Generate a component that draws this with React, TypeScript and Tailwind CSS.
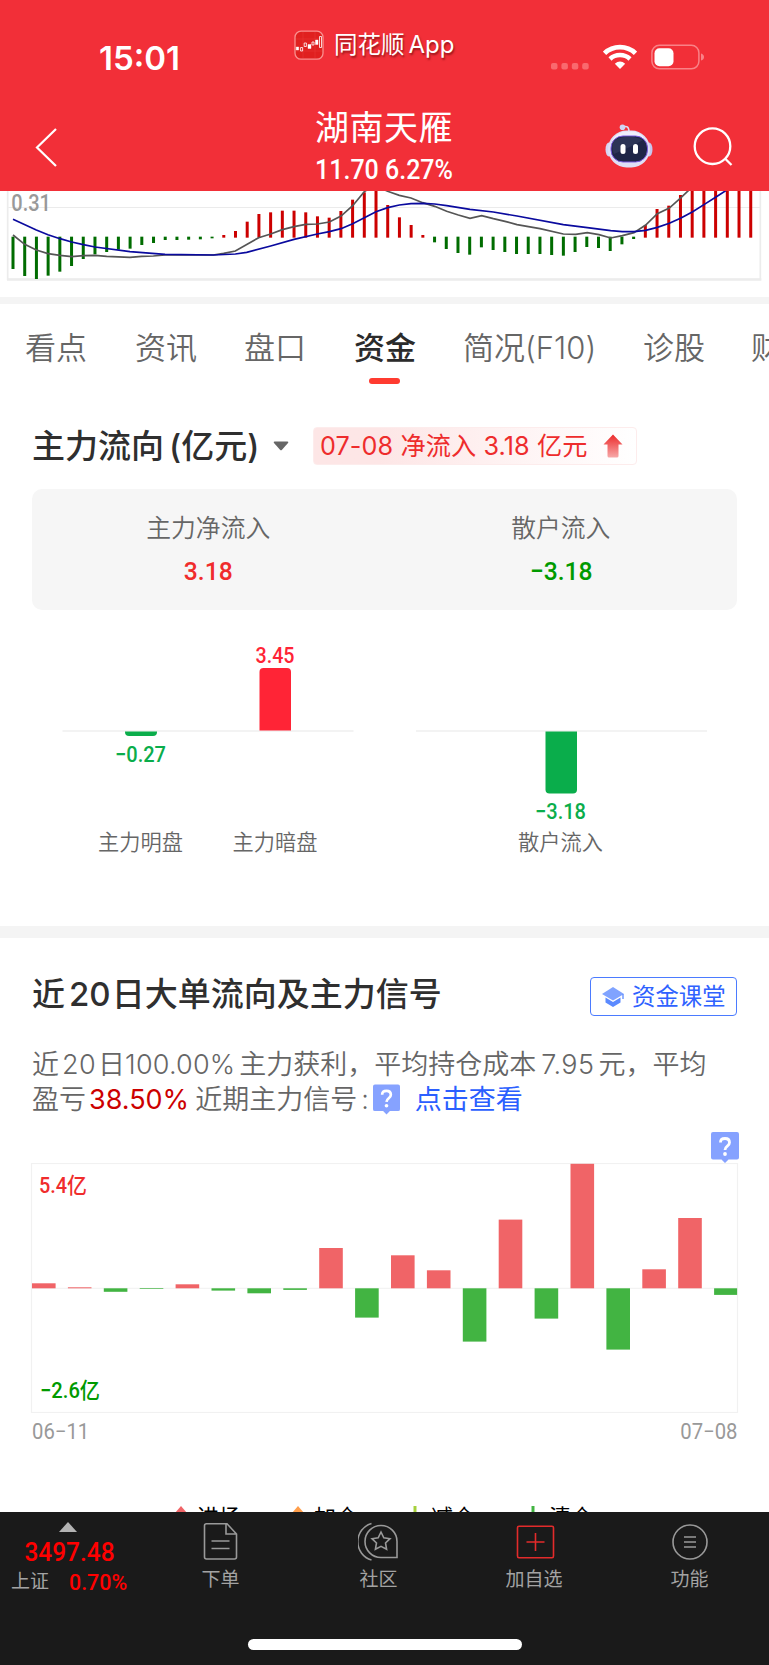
import type { ReactNode } from "react";

const MACD_STEP = 35.13;
const MACD_START = 39;

// bottom edge of a falling bar (green) or top edge of a rising bar (red)
const MACD_BARS: { up: boolean; edges: number[] }[] = [
  { up: false, edges: [252, 273, 282, 272, 260, 243, 222, 208, 201, 194, 191, 180, 174, 165, 165, 164, 163, 160] },
  { up: true, edges: [150, 138, 110, 87, 82, 77, 77, 82, 94, 98, 78, 44, 22, 10, 60, 97, 120, 150] },
  { up: false, edges: [172, 192, 204, 209, 187, 195, 201, 207, 207, 207, 210, 212, 201, 186, 189, 198, 178, 162] },
  { up: true, edges: [120, 72, 62, 30, 0, 0, 0, 0, 0, 0] },
];

const MACD_ITEMS = MACD_BARS.flatMap((g) => g.edges.map((edge) => ({ up: g.up, edge })));

const DIF_LINE =
  "39,150 74,178 109,195 144,206 180,211 215,215 250,212 285,211 320,214 390,217 425,214 460,213 495,210 640,210 671,205 706,198 776,158 812,147 847,134 882,125 917,118 952,117 988,111 1023,93 1058,62 1093,20 1118,4 1140,8 1163,19 1198,31 1233,39 1268,53 1304,64 1340,79 1375,90 1410,100 1445,92 1480,101 1515,109 1551,119 1620,131 1690,147 1727,148 1762,143 1797,149 1832,159 1867,152 1902,143 1937,120 1972,86 2008,69 2043,38 2068,14";
const DEA_LINE =
  "39,103 109,135 144,149 180,161 215,171 250,179 285,186 390,200 495,208 640,210 706,207 740,202 812,183 882,163 952,147 988,140 1023,131 1058,116 1093,98 1128,80 1163,68 1198,60 1233,56 1270,55 1304,57 1340,62 1410,73 1480,81 1551,93 1690,119 1762,128 1832,137 1867,140 1902,140 1937,136 1972,127 2008,115 2043,99 2078,80 2113,58 2148,36 2182,14";

// height in px of each day's bar, sign gives the direction
const FLOW_BARS = [5, 1, -3.5, -0.7, 4, -2.3, -5, -1.6, 40.3, -29.3, 33, 18, -53.3, 68.7, -30.3, 124.5, -61.3, 19, 70.3, -6.6];

function StatusBar() {
  return (
    <div className="flex h-[92px] items-start pl-[99px]">
      <span className="mt-[41px] w-[195px] font-['Inter'] text-[33px] font-semibold leading-[34px]">
        15:01
      </span>
      <div className="mt-[29px] flex w-[257px] items-center">
        <svg className="h-[30px] w-[30px]" viewBox="0 0 30 30" fill="none">
          <rect x="1" y="1.2" width="28" height="28" rx="6" fill="#e0201f" stroke="#f9908f" strokeWidth="1.3" />
          <path d="M2 9H28M2 21H28M9 2V28M21 2V28" stroke="#ea3a38" strokeWidth="0.5" />
          <path d="M2.2 17h2.5v3H2.2zM14 14.500h3v4h-3zM21.500 10h2.500v4.500h-2.500z" fill="#fff" stroke="#fff" strokeWidth="0.4" />
          <path d="M6.600 17.500h2v3.500h-2zM10.200 13h2.200v3.500h-2.200zM18 12h2v3h-2zM25.500 6.500h2v11h-2z" stroke="#fff" strokeWidth="0.8" />
        </svg>
        <span className="ml-[10px] text-[23.500px] leading-[32px] [text-shadow:1px_2px_2px_rgba(80,0,0,0.55)]">
          同花顺<span className="ml-[4px] text-[24px]">App</span>
        </span>
      </div>
      <div className="mt-[44px] flex items-start">
        <svg className="mt-[19px] h-[7px] w-[40px]" viewBox="0 0 40 7" fill="#f9696e">
          {[0, 10.4, 20.8, 31.2].map((x) => (
            <rect key={x} x={x} width="6.500" height="6.500" rx="2" />
          ))}
        </svg>
        <svg className="ml-[12px] h-[26px] w-[34px]" viewBox="0 0 34 26" fill="none" stroke="#fff">
          <path d="M1.500 9.300C10 1 24 1 32.500 9.300" strokeWidth="4.800" />
          <path d="M7 15C12.500 9.800 21.500 9.800 27 15" strokeWidth="4.500" />
          <path d="M17 25L11.800 19.700Q17 15.300 22.200 19.700Z" fill="#fff" stroke="none" />
        </svg>
        <svg className="ml-[14px] h-[26px] w-[54px]" viewBox="0 0 54 26">
          <rect x="0.900" y="1.300" width="47" height="23.500" rx="7.500" fill="none" stroke="#f98287" strokeWidth="1.500" />
          <rect x="3.500" y="4.200" width="19" height="18" rx="5" fill="#fff" />
          <path d="M50 9.500Q53 10.500 53 13T50 16.500Z" fill="#f98287" />
        </svg>
      </div>
    </div>
  );
}

function Robot() {
  return (
    <svg className="h-[44px] w-[48px]" viewBox="0 0 48 44">
      <path d="M17 3.500Q24 0 24 8" fill="none" stroke="#dcdcf2" strokeWidth="1.600" />
      <circle cx="17.500" cy="3.200" r="2.800" fill="#cfd4f3" />
      <ellipse cx="4" cy="25.500" rx="3.500" ry="7" fill="#d6d5f3" />
      <ellipse cx="44" cy="25.500" rx="3.500" ry="7" fill="#c7c6ee" />
      <rect x="3" y="6.500" width="42" height="37" rx="18.500" fill="#dfdff5" />
      <rect x="6" y="7.500" width="36" height="31" rx="15.500" fill="#efeffb" />
      <rect x="6" y="12" width="36.500" height="26" rx="12" fill="#1e2547" stroke="#7a5be0" strokeWidth="1" />
      <path d="M10 16Q23 9 38 16Q28 22 9 30Q5 21 10 16Z" fill="#323a5c" opacity="0.7" />
      <rect x="15.500" y="20" width="5" height="10" rx="2.500" fill="#fff" />
      <rect x="28" y="20" width="5" height="10" rx="2.500" fill="#fff" />
    </svg>
  );
}

function TitleBar() {
  return (
    <div className="flex h-[99px] items-start pl-[35px]">
      <svg className="mt-[35px] h-[40px] w-[24px]" viewBox="0 0 24 40" fill="none" stroke="#fff" strokeWidth="2.200">
        <path d="M21 2L2 20.500L21 39" />
      </svg>
      <div className="ml-[216px] w-[218px] text-center">
        <div className="mt-[16px] text-[34px] leading-[40px] tracking-[0.500px]">湖南天雁</div>
        <div className="mt-[7px] scale-x-[0.925] font-['Roboto'] text-[27px] font-medium leading-[30px]">11.70 6.27%</div>
      </div>
      <div className="ml-[112px] mt-[32px]">
        <Robot />
      </div>
      <svg className="ml-[40px] mt-[34px] h-[42px] w-[42px]" viewBox="0 0 42 42" fill="none" stroke="#fff" strokeWidth="2.300">
        <circle cx="19.500" cy="20.200" r="17.800" />
        <path d="M32 32.500L38.500 39" />
      </svg>
    </div>
  );
}

function MacdChart() {
  return (
    <svg className="block h-[106px] w-full" viewBox="0 18 2307 318" fill="none">
      <path d="M23 18V283H2281V18" stroke="#ececec" strokeWidth="5" />
      <path d="M21 283.500H2284" stroke="#ececec" strokeWidth="8" />
      <path d="M25 67.500H2280" stroke="#ebebeb" strokeWidth="3" />
      {MACD_ITEMS.map((b, i) => (
        <rect
          key={i}
          x={MACD_START + i * MACD_STEP - 4.5}
          y={b.up ? b.edge : 155}
          width="9"
          height={b.up ? 158 - b.edge : b.edge - 155}
          fill={b.up ? "#cc0000" : "#006c00"}
        />
      ))}
      <polyline points={DIF_LINE} stroke="#555" strokeWidth="5" />
      <polyline points={DEA_LINE} stroke="#0a0a9e" strokeWidth="5" />
      <text
        x="34"
        y="77"
        fill="#999"
        fontFamily="Roboto"
        fontSize="69"
        fontWeight="500"
        textLength="119"
        lengthAdjust="spacingAndGlyphs"
      >
        0.31
      </text>
    </svg>
  );
}

function Tabs() {
  const tabs = [
    { label: "看点", width: "w-[110px]" },
    { label: "资讯", width: "w-[109px]" },
    { label: "盘口", width: "w-[110px]" },
    { label: "资金", width: "w-[109px]", active: true },
    { label: "简况(F10)", width: "w-[180px]" },
    { label: "诊股", width: "w-[108px]" },
    { label: "财务", width: "w-[62px]" },
  ];
  return (
    <div className="flex h-[106px] overflow-hidden pl-[25px] pt-[22px]">
      {tabs.map((t) => (
        <div key={t.label} className={`shrink-0 ${t.width}`}>
          <div
            className={`whitespace-nowrap text-[31px] leading-[44px] ${
              t.active ? "font-medium text-[#2b2b2b]" : "font-[350] text-[#666]"
            }`}
          >
            {t.label}
          </div>
          {t.active && <div className="ml-[15px] mt-[8px] h-[6px] w-[31px] rounded-full bg-[#ff3b30]" />}
        </div>
      ))}
    </div>
  );
}

function SectionHeading() {
  return (
    <div className="flex h-[79px] items-start pl-[32px] pt-[17px]">
      <h2 className="w-[226px] whitespace-nowrap text-[33px] font-medium leading-[38px] text-[#2f2f2f]">
        主力流向<span className="ml-[5px]">(亿元)</span>
      </h2>
      <svg className="ml-[15px] mt-[14px] h-[10px] w-[16px]" viewBox="0 0 16 10" fill="#666">
        <path d="M1.500 0.500H14.500Q16 0.500 15 2L9 8.800Q8 9.800 7 8.800L1 2Q0 0.500 1.500 0.500Z" />
      </svg>
      <div className="ml-[24px] flex h-[38px] w-[324px] items-center rounded-[4px] border border-[#fdecec] bg-linear-to-r from-[#fde6e6] from-20% to-white pl-[6px]">
        <span className="w-[269px] whitespace-nowrap text-[25.200px] leading-[36px] tracking-[0.100px] text-[#ee2c2c]">
          07-08 净流入 3.18 亿元
        </span>
        <svg className="ml-[14px] h-[24px] w-[20px]" viewBox="0 0 20 24">
          <defs>
            <linearGradient id="rise" x1="0" y1="0" x2="0" y2="1">
              <stop offset="0" stopColor="#ec2a2a" />
              <stop offset="1" stopColor="#f7a8a8" />
            </linearGradient>
          </defs>
          <path d="M10 0.500L19.500 10.500H15.500V22Q15.500 23.500 14 23.500H6Q4.500 23.500 4.500 22V10.500H0.500Z" fill="url(#rise)" />
        </svg>
      </div>
    </div>
  );
}

function FlowTotal({ label, value, color }: { label: string; value: string; color: string }) {
  return (
    <div className="flex-1 text-center">
      <div className="text-[24.800px] font-[350] leading-[36px] text-[#666]">{label}</div>
      <div className={`mt-[10px] scale-x-[0.93] font-['Roboto'] text-[26.500px] font-medium leading-[30px] ${color}`}>
        {value}
      </div>
    </div>
  );
}

function MainForceChart() {
  return (
    <svg className="block h-[316px] w-full font-['Roboto','Noto_Sans_CJK_SC',sans-serif]" viewBox="0 610 769 316">
      <path d="M62.500 731H353.500M416 731H707" stroke="#f0f0f0" strokeWidth="1.500" />
      <path d="M125 731.500H157V732Q157 736 153 736H129Q125 736 125 732Z" fill="#0aad4b" />
      <path d="M259.500 730.500V672Q259.500 668 263.500 668H287Q291 668 291 672V730.500Z" fill="#ff2436" />
      <path d="M545.500 731.500V789.500Q545.500 793.500 549.500 793.500H573Q577 793.500 577 789.500V731.500Z" fill="#0aad4b" />
      <g fontSize="22" fontWeight="500" textAnchor="middle">
        <text x="275" y="663" fill="#ff2436" textLength="39" lengthAdjust="spacingAndGlyphs">3.45</text>
        <text x="140.500" y="762" fill="#0aad4b" textLength="51" lengthAdjust="spacingAndGlyphs">−0.27</text>
        <text x="560.500" y="819" fill="#0aad4b" textLength="51" lengthAdjust="spacingAndGlyphs">−3.18</text>
      </g>
      <g fontSize="21.200" fill="#666" fontWeight="350" textAnchor="middle">
        <text x="140.500" y="849.500">主力明盘</text>
        <text x="275" y="849.500">主力暗盘</text>
        <text x="560.500" y="849.500">散户流入</text>
      </g>
    </svg>
  );
}

function HelpBubble({ className }: { className: string }) {
  return (
    <svg className={className} viewBox="0 0 28 31">
      <path d="M2 0H26Q28 0 28 2V25.500Q28 27.500 26 27.500H17.500L14 31L10.500 27.500H2Q0 27.500 0 25.500V2Q0 0 2 0Z" fill="#86a2ff" />
      <path d="M9.500 10.500Q9.500 6.500 14 6.500T18.500 10.500Q18.500 12.500 16.300 14.200T14 18" fill="none" stroke="#fff" strokeWidth="2.800" />
      <circle cx="14" cy="22" r="1.900" fill="#fff" />
    </svg>
  );
}

function SignalSection() {
  return (
    <section>
      <div className="flex h-[98px] items-start justify-between px-[32px] pt-[39px]">
        <h2 className="-mt-px whitespace-nowrap text-[33px] font-medium leading-[36px] text-[#2f2f2f]">
          近<span className="ml-[4px] mr-px">20</span>日大单流向及主力信号
        </h2>
        <button className="flex h-[39px] w-[147px] items-center rounded-[4px] border border-[#4b7bff] pl-[11px] text-[23.400px] leading-[36px] text-[#2f62ff]">
          <svg className="mr-[8px] h-[20px] w-[22px] shrink-0" viewBox="0 0 22 20">
            <path d="M11 0L22 7L11 13.500L0 7Z" fill="#80a3ff" />
            <path d="M3.500 10.500L11 15L18.500 10.500V15.500L11 20L3.500 15.500Z" fill="#5b8aff" />
            <path d="M21 7V12" stroke="#5b8aff" strokeWidth="1.300" />
          </svg>
          <span className="whitespace-nowrap">资金课堂</span>
        </button>
      </div>
      <div className="h-[96px] whitespace-nowrap pl-[32px] pt-[11px] text-[27px] font-[350] text-[#666]">
        <div className="h-[35px] leading-[35px]">
          近<span className="ml-[3px] mr-[2px] tracking-[0.400px]">20</span>日
          <span className="mr-[4px] tracking-[0.200px]">100.00%</span>
          主力获利，平均持仓成本<span className="ml-[5px] mr-[4px] tracking-[0.400px]">7.95</span>元，平均
        </div>
        <div className="flex h-[35px] items-center leading-[35px]">
          <span>盈亏</span>
          <span className="ml-[3px] font-normal text-[#cc0000]">38.50%</span>
          <span className="ml-[6px]">近期主力信号</span>
          <span className="ml-[4px]">:</span>
          <HelpBubble className="ml-[4px] h-[31px] w-[27px]" />
          <a className="ml-[15px] font-normal text-[#2b5fff]">点击查看</a>
        </div>
      </div>
      <div className="flex h-[31px] justify-end pr-[30px]">
        <HelpBubble className="h-[31px] w-[28px]" />
      </div>
      <svg
        className="block h-[250px] w-full font-['Roboto','Noto_Sans_CJK_SC',sans-serif]"
        viewBox="0 1163 769 250"
        fontSize="22"
      >
        <rect x="31.500" y="1163.500" width="706" height="249" fill="none" stroke="#f1f1f1" strokeWidth="1.200" />
        <path d="M32 1288.300H737" stroke="#f1f1f1" />
        {FLOW_BARS.map((h, i) => (
          <rect
            key={i}
            x={32 + i * 35.9}
            y={h > 0 ? 1288.3 - h : 1288.3}
            width={i === 19 ? 23 : 23.6}
            height={Math.abs(h)}
            fill={h > 0 ? "#f06467" : "#42b442"}
          />
        ))}
        <text x="39" y="1192.500" fill="#f02c2c" fontWeight="500" textLength="48" lengthAdjust="spacingAndGlyphs">
          5.4亿
        </text>
        <text x="40" y="1397.500" fill="#009a00" fontWeight="500" textLength="60" lengthAdjust="spacingAndGlyphs">
          −2.6亿
        </text>
      </svg>
      <div className="flex h-[36px] justify-between px-[32px] pt-[6px] font-['Roboto'] text-[21.800px] leading-[26px] text-[#999]">
        <span className="origin-left scale-x-[0.93]">06−11</span>
        <span className="origin-right scale-x-[0.93]">07−08</span>
      </div>
    </section>
  );
}

function SignalLegend() {
  const items: { label: string; width: string; mark: ReactNode }[] = [
    { label: "进场", width: "w-[117px]", mark: <path d="M6 0L12 7V18H0V7Z" fill="#f06467" /> },
    { label: "加仓", width: "w-[117px]", mark: <path d="M6 0L12 7V18H0V7Z" fill="#ff9e4a" /> },
    { label: "减仓", width: "w-[118px]", mark: <path d="M4.500 0H7.500V18H4.500Z" fill="#a6d03c" /> },
    { label: "清仓", width: "w-[100px]", mark: <path d="M4.500 0H7.500V18H4.500Z" fill="#42b442" /> },
  ];
  return (
    <div className="flex h-[63px] items-start overflow-hidden pl-[175px] pt-[56px]">
      {items.map((it) => (
        <div key={it.label} className={`flex shrink-0 items-start ${it.width}`}>
          <svg className="mt-[1px] h-[18px] w-[12px]" viewBox="0 0 12 18">
            {it.mark}
          </svg>
          <span className="ml-[10px] text-[22px] leading-[24px] text-black">{it.label}</span>
        </div>
      ))}
    </div>
  );
}

function NavItem({ label, width, children }: { label: string; width: string; children: ReactNode }) {
  return (
    <div className={`flex shrink-0 flex-col items-center ${width}`}>
      <svg className="mt-[10px] h-[40px] w-[42px]" viewBox="0 0 42 40" fill="none" stroke="#999" strokeWidth="1.600">
        {children}
      </svg>
      <span className="mt-[5px] text-[19px] leading-[26px] text-[#a3a3a3]">{label}</span>
    </div>
  );
}

function BottomBar() {
  return (
    <footer className="h-[153px] bg-[#1a1a1a]">
      <div className="flex h-[127px]">
        <div className="w-[139px] shrink-0">
          <svg className="ml-[59px] mt-[10px] h-[10px] w-[18px]" viewBox="0 0 18 10" fill="#b3b3b3">
            <path d="M9 0L18 10H0Z" />
          </svg>
          <div className="mt-[5px] scale-x-[0.94] text-center font-['Roboto'] text-[26px] font-medium leading-[30px] text-[#ff0000]">
            3497.48
          </div>
          <div className="mt-[1px] flex items-center pl-[11px] leading-[28px]">
            <span className="text-[19px] text-[#a3a3a3]">上证</span>
            <span className="ml-[20px] origin-left scale-x-[0.95] font-['Roboto'] text-[22.500px] font-medium text-[#ff0000]">
              0.70%
            </span>
          </div>
        </div>
        <NavItem label="下单" width="w-[163px]">
          <path d="M4.500 3.800Q4.500 1.800 6.500 1.800H27L36.500 12V35Q36.500 37 34.500 37H6.500Q4.500 37 4.500 35ZM26 2V12H36M11.500 19H29.500M11.500 26.500H29.500" />
        </NavItem>
        <NavItem label="社区" width="w-[153px]">
          <path d="M39 19.500A16 16 0 1 0 23 35.500H39Z" />
          <path d="M13.500 1.500A19 19 0 0 0 13.500 38" />
          <path d="M23 10L25.800 15.800L32 16.700L27.500 21L28.600 27.200L23 24.300L17.400 27.200L18.500 21L14 16.700L20.200 15.800Z" />
        </NavItem>
        <NavItem label="加自选" width="w-[158px]">
          <path
            d="M6 4.200H39Q40.500 4.200 40.500 5.700V34Q40.500 35.700 39 35.700H6Q4.500 35.700 4.500 34V5.700Q4.500 4.200 6 4.200ZM22.500 11V29M13.500 20H31.500"
            stroke="#e32b2b"
          />
        </NavItem>
        <NavItem label="功能" width="w-[153px]">
          <circle cx="21" cy="20" r="17" />
          <path d="M15 15H27M15 20H27M15 25H27" />
        </NavItem>
      </div>
      <div className="mx-auto h-[11px] w-[274px] rounded-full bg-white" />
    </footer>
  );
}

export default function App() {
  return (
    <div className="h-[1665px] w-[769px] overflow-hidden bg-white font-['Inter','Noto_Sans_CJK_SC',sans-serif]">
      <header className="h-[191px] bg-[#f22f38] text-white">
        <StatusBar />
        <TitleBar />
      </header>
      <MacdChart />
      <div className="h-[7px] bg-[#f4f4f4]" />
      <Tabs />
      <SectionHeading />
      <div className="mx-[32px] flex h-[121px] rounded-[10px] bg-[#f6f6f6] pt-[21px]">
        <FlowTotal label="主力净流入" value="3.18" color="text-[#f02c2c]" />
        <FlowTotal label="散户流入" value="−3.18" color="text-[#009a00]" />
      </div>
      <MainForceChart />
      <div className="h-[12px] bg-[#f4f4f4]" />
      <SignalSection />
      <SignalLegend />
      <BottomBar />
    </div>
  );
}
